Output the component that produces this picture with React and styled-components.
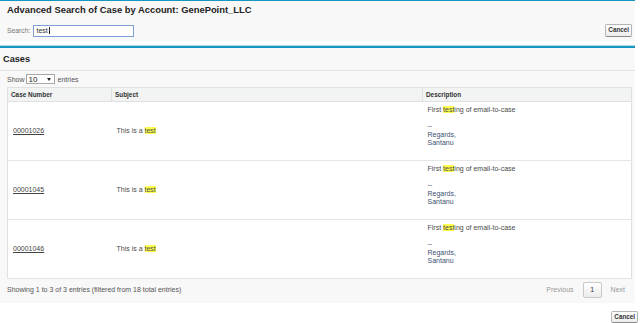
import React from 'react';
import styled, { createGlobalStyle } from 'styled-components';

const GlobalStyle = createGlobalStyle`
  body {
    margin: 0;
    background: #fff;
    font-family: "Liberation Sans", Arial, sans-serif;
    color: #333;
  }
`;

const Page = styled.div`
  width: 640px;
  height: 323px;
  overflow: hidden;
`;

const TopBlock = styled.div`
  width: 635px;
  box-sizing: border-box;
  background: #f8f8f8;
  border-top: 1px solid #1797c0;
  padding: 3px 3px 4px 7px;
`;

const BlockTitle = styled.h2`
  margin: 0;
  font-size: 9.4px;
  line-height: 12px;
  font-weight: bold;
  color: #222;
`;

const SearchRow = styled.div`
  display: flex;
  align-items: center;
  margin-top: 8px;
  height: 13px;
`;

const Label = styled.label`
  font-size: 6.8px;
  color: #777;
  margin-right: 3px;
`;

const SearchBox = styled.div`
  width: 101px;
  height: 12px;
  box-sizing: border-box;
  border: 1px solid #7fa2d6;
  background: #fff;
  display: flex;
  align-items: center;
  padding-left: 2px;
  font-size: 7px;
  color: #333;
`;

const Caret = styled.span`
  display: inline-block;
  width: 1px;
  height: 7px;
  margin-left: 1px;
  background: #222;
`;

const Button = styled.button`
  margin-left: auto;
  font-family: inherit;
  font-size: 6.3px;
  font-weight: bold;
  color: #333;
  height: ${(p) => p.$h || 13}px;
  padding: 0 2px;
  border: 1px solid #b5b5b5;
  border-bottom-color: #8a8a8a;
  border-radius: 2px;
  background: linear-gradient(#ffffff, #ececec);
  line-height: 1;
`;

const CasesBlock = styled.section`
  width: 635px;
  box-sizing: border-box;
  margin-top: 5px;
  border-top: 2px solid #1797c0;
  box-shadow: 0 -1px 0 #b3d9ea;
  background: #f8f8f8;
  padding-bottom: 3px;
`;

const CasesHeader = styled.h3`
  margin: 0;
  padding: 0 3px;
  height: 22px;
  line-height: 22px;
  font-size: 9.2px;
  font-weight: bold;
  color: #222;
  border-bottom: 1px solid #e3e3e3;
`;

const CasesBody = styled.div`
  padding: 0 3px 0 7px;
`;

const LengthRow = styled.div`
  display: flex;
  align-items: center;
  height: 16px;
  font-size: 7px;
  color: #555;
`;

const Select = styled.div`
  display: flex;
  align-items: center;
  justify-content: space-between;
  width: 29px;
  height: 10px;
  box-sizing: border-box;
  margin: 0 3px 0 1px;
  padding: 0 3px 0 2px;
  border: 1px solid #a6a6a6;
  background: #fff;
  font-size: 8px;
  color: #222;
`;

const Table = styled.table`
  width: 100%;
  border-collapse: collapse;
  background: #fff;
  border: 1px solid #e0e0e0;
  table-layout: fixed;
`;

const Th = styled.th`
  width: ${(p) => p.$w || 'auto'};
  background: #f2f3f3;
  font-size: 6.4px;
  font-weight: bold;
  color: #333;
  text-align: left;
  height: 13px;
  padding: 0 3px;
  border-right: 1px solid #e0e0e0;
  border-bottom: 1px solid #e0e0e0;
`;

const Td = styled.td`
  font-size: 7px;
  color: #4a4a4a;
  padding: ${(p) => (p.$top ? '4px 5px 0' : '0 5px')};
  vertical-align: ${(p) => (p.$top ? 'top' : 'middle')};
  line-height: 8.2px;
  height: 59px;
  box-sizing: border-box;
  border-bottom: 1px solid #e6e6e6;
`;

const CaseLink = styled.a`
  color: #444;
  text-decoration: underline;
`;

const Hit = styled.mark`
  background: #ffff4d;
  color: inherit;
  padding: 0;
`;

const DescLine = styled.div`
  color: ${(p) => (p.$sig ? '#3d5270' : '#4a4a4a')};
  min-height: 8.2px;
`;

const Footer = styled.div`
  display: flex;
  align-items: center;
  height: 21px;
  font-size: 7px;
  color: #555;
`;

const Pager = styled.div`
  margin-left: auto;
  display: flex;
  align-items: center;
  gap: 9px;
  padding-right: 7px;
  color: #999;
`;

const PageBtn = styled.span`
  width: 19px;
  height: 16px;
  box-sizing: border-box;
  display: flex;
  align-items: center;
  justify-content: center;
  border: 1px solid #c8c8c8;
  border-radius: 2px;
  background: linear-gradient(#ffffff, #ececec);
  color: #333;
`;

const BottomBar = styled.div`
  display: flex;
  padding: 8px 2px 0 0;
`;

const cases = [
  { id: '00001026' },
  { id: '00001045' },
  { id: '00001046' },
];

const Arrow = () => (
  <svg width="4" height="3" viewBox="0 0 4 3">
    <path d="M0 0h4L2 3z" fill="#222" />
  </svg>
);

const App = () => (
  <Page>
    <GlobalStyle />
    <TopBlock>
      <BlockTitle>Advanced Search of Case by Account: GenePoint_LLC</BlockTitle>
      <SearchRow>
        <Label>Search:</Label>
        <SearchBox>
          test
          <Caret />
        </SearchBox>
        <Button>Cancel</Button>
      </SearchRow>
    </TopBlock>

    <CasesBlock>
      <CasesHeader>Cases</CasesHeader>
      <CasesBody>
        <LengthRow>
          Show
          <Select>
            10
            <Arrow />
          </Select>
          entries
        </LengthRow>
        <Table>
          <thead>
            <tr>
              <Th $w="97px">Case Number</Th>
              <Th $w="304px">Subject</Th>
              <Th>Description</Th>
            </tr>
          </thead>
          <tbody>
            {cases.map((c) => (
              <tr key={c.id}>
                <Td>
                  <CaseLink href="#">{c.id}</CaseLink>
                </Td>
                <Td>
                  This is a <Hit>test</Hit>
                </Td>
                <Td $top>
                  <DescLine>
                    First <Hit>test</Hit>ing of email-to-case
                  </DescLine>
                  <DescLine />
                  <DescLine $sig>--</DescLine>
                  <DescLine $sig>Regards,</DescLine>
                  <DescLine $sig>Santanu</DescLine>
                </Td>
              </tr>
            ))}
          </tbody>
        </Table>
        <Footer>
          Showing 1 to 3 of 3 entries (filtered from 18 total entries)
          <Pager>
            <span>Previous</span>
            <PageBtn>1</PageBtn>
            <span>Next</span>
          </Pager>
        </Footer>
      </CasesBody>
    </CasesBlock>

    <BottomBar>
      <Button $h={12}>Cancel</Button>
    </BottomBar>
  </Page>
);

export default App;
